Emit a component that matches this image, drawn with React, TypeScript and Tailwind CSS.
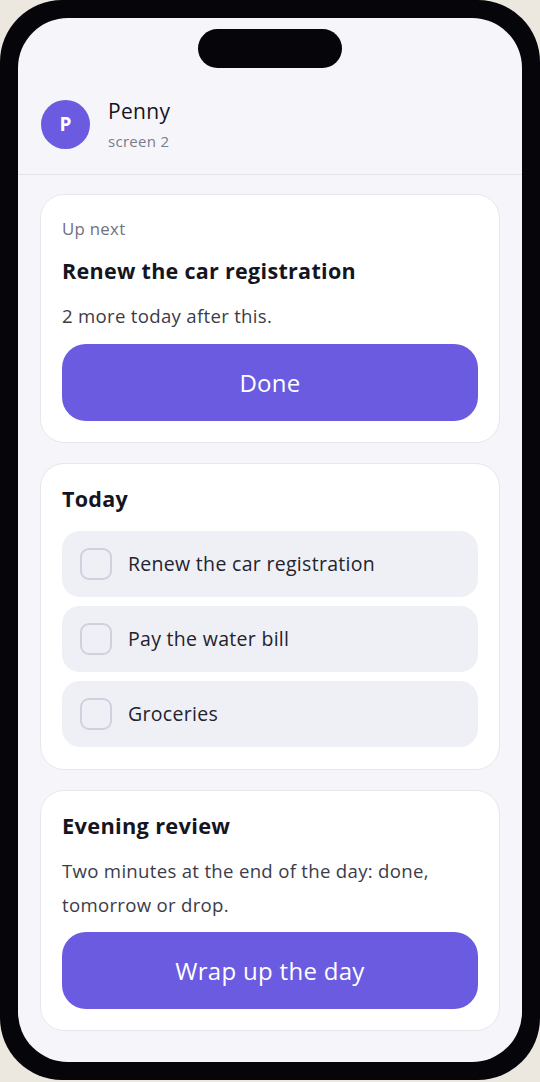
import { useState } from 'react';

const tasks = ['Renew the car registration', 'Pay the water bill', 'Groceries'];

export default function App() {
  const [checked, setChecked] = useState<Record<number, boolean>>({});

  return (
    <div className="w-[540px] h-[1082px] bg-[#ece8e0] overflow-hidden tracking-[0.3px]" style={{ fontFamily: '"Open Sans", "Noto Sans", sans-serif' }}>
      <div className="w-[540px] h-[1080px] rounded-[62px] bg-[#06060a] p-[18px]">
        <div className="h-full rounded-[50px] bg-[#f6f6fa] overflow-hidden flex flex-col">
          <div className="pt-[11px] flex justify-center">
            <div className="w-[144px] h-[39px] rounded-full bg-[#06060a]" />
          </div>

          <div className="flex items-center gap-[18px] px-[23px] pt-[29px] pb-[22px] border-b border-[#e3e4ec]">
            <div className="w-[49px] h-[49px] rounded-full bg-[#6a5be0] flex items-center justify-center text-white text-[19px] font-bold">
              P
            </div>
            <div className="flex flex-col">
              <span className="text-[21px] leading-[28px] text-[#15151f]">Penny</span>
              <span className="text-[15px] leading-[22px] text-[#7a7b8c] mt-[5px]">screen 2</span>
            </div>
          </div>

          <div className="flex flex-col gap-[20px] px-[22px] pt-[19px]">
            <div className="bg-white rounded-[24px] border border-[#e6e7ee] p-[21px]">
              <p className="text-[16.8px] leading-[24px] text-[#6f7080] mt-[1px]">Up next</p>
              <p className="text-[21.5px] leading-[28px] font-bold text-[#15151f] mt-[16px]">Renew the car registration</p>
              <p className="text-[18.6px] leading-[26px] text-[#3b3c4a] mt-[18px]">2 more today after this.</p>
              <button className="mt-[15px] w-full h-[77px] rounded-[24px] bg-[#6a5be0] text-white text-[24px]">Done</button>
            </div>

            <div className="bg-white rounded-[24px] border border-[#e6e7ee] px-[21px] pt-[21px] pb-[22px]">
              <p className="text-[21.5px] leading-[30px] font-bold text-[#15151f] -mt-[1px]">Today</p>
              <div className="flex flex-col gap-[9px] mt-[17px]">
                {tasks.map((t, i) => (
                  <div
                    key={t}
                    onClick={() => setChecked(prev => ({ ...prev, [i]: !prev[i] }))}
                    className="h-[66px] rounded-[18px] bg-[#eff0f6] flex items-center gap-[16px] px-[18px]"
                  >
                    <div className={`w-[32px] h-[32px] rounded-[9px] border-2 ${checked[i] ? 'border-[#6a5be0] bg-[#6a5be0]' : 'border-[#cfd1de] bg-[#eff0f6]'}`} />
                    <span className="text-[19.5px] text-[#22232e]">{t}</span>
                  </div>
                ))}
              </div>
            </div>

            <div className="bg-white rounded-[24px] border border-[#e6e7ee] p-[21px]">
              <p className="text-[21.8px] leading-[30px] font-bold text-[#15151f] -mt-[1px]">Evening review</p>
              <p className="text-[18.6px] leading-[34px] text-[#3b3c4a] mt-[13px]">Two minutes at the end of the day: done, tomorrow or drop.</p>
              <button className="mt-[10px] w-full h-[77px] rounded-[24px] bg-[#6a5be0] text-white text-[24px]">Wrap up the day</button>
            </div>
          </div>
        </div>
      </div>
    </div>
  );
}
